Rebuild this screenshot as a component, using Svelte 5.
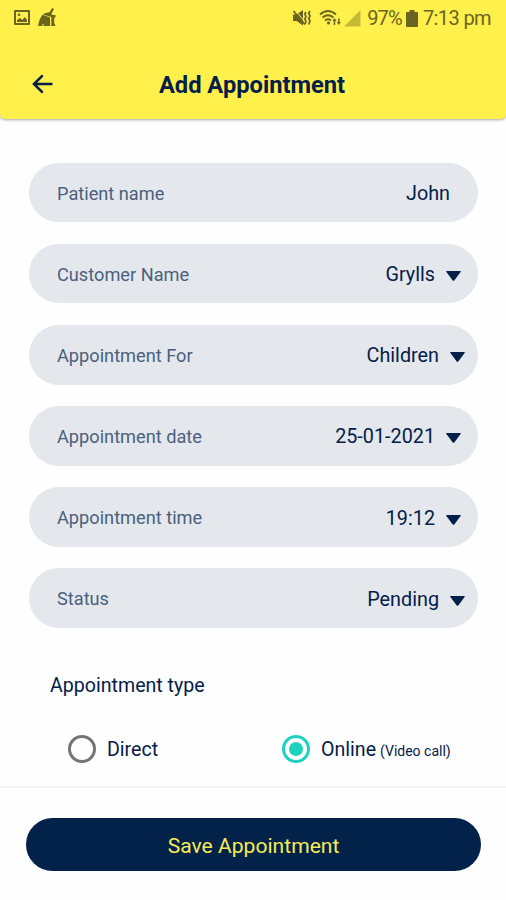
<script>
  const fields = [
    { label: 'Patient name', value: 'John', kind: 'text' },
    { label: 'Customer Name', value: 'Grylls', kind: 'picker' },
    { label: 'Appointment For', value: 'Children', kind: 'select' },
    { label: 'Appointment date', value: '25-01-2021', kind: 'picker' },
    { label: 'Appointment time', value: '19:12', kind: 'picker' },
    { label: 'Status', value: 'Pending', kind: 'select' }
  ];

  const types = [
    { id: 'direct', label: 'Direct', note: '' },
    { id: 'online', label: 'Online', note: '(Video call)' }
  ];

  let selected = 'online';
</script>

<div class="screen">
  <header class="header">
    <div class="status-bar">
      <div class="status-left">
        <svg width="18" height="18" viewBox="0 0 18 18">
          <path fill-rule="evenodd" d="M2 1h14q1 0 1 1v13q0 1-1 1H2q-1 0-1-1V2q0-1 1-1zM3 3v11h12V3z" />
          <path d="M4 13v-2l3-2 2 2 3-3 2 3v2z" />
          <circle cx="6" cy="5.8" r="1.3" />
        </svg>
        <svg class="broom" width="19" height="19" viewBox="0 0 19 19">
          <path d="M14.2 0l1.8 1-2.6 5 1.6 1.5v2L5 6.5Q7.4 4.2 11.2 4.6z" />
          <path d="M4.6 6.8l7.6 2.7.4 8.5H.2Q1 11 4.6 6.8z" />
          <path d="M13.2 7h4.3v2.5h-1.3V15l1.3 3h-4.3z" />
          <path class="cut" d="M12.7 9v9M4.5 18l.8-2" />
        </svg>
      </div>
      <div class="status-right">
        <svg width="20" height="18" viewBox="0 0 20 18">
          <path d="M1 5.500h3.500L11 1v15.500L4.500 12H1z" />
          <path class="cut" d="M3 1l10 12" />
          <path class="line" d="M1.500 2l11.500 13.500" />
          <path class="line" d="M14 3l-1.200 2L14 7.500 12.800 10l1.200 2.500-1 2.500M18 2l-1.300 2.500L18 7l-1.300 2.500L18 12l-1.300 3.500" />
        </svg>
        <svg class="wifi" width="23" height="18" viewBox="0 0 23 18">
          <path class="line" d="M1 5.500Q9 -1.500 17 5.500M3.500 8.500q5.500-4.500 11 0M6 11.500q3-2.500 6 0" />
          <circle cx="9.500" cy="14" r="1.600" />
          <path d="M15.500 9l2 3H16.200v4h-1.500v-4h-1.200zM19.800 16l-2-3h1.300v-3.500h1.500V13h1.200z" />
        </svg>
        <svg class="signal" width="17" height="17" viewBox="0 0 17 17">
          <path d="M16.500 0v16.500H0z" />
        </svg>
        <span class="battery-text">97%</span>
        <svg class="battery" width="12" height="17" viewBox="0 0 12 17">
          <path d="M3.500 0h5v2H11q1 0 1 1v13q0 1-1 1H1q-1 0-1-1V3q0-1 1-1h2.500z" />
        </svg>
        <span class="clock">7:13 pm</span>
      </div>
    </div>
    <div class="app-bar">
      <button class="back" type="button" aria-label="Back">
        <svg width="22" height="20" viewBox="0 0 22 20">
          <path d="M20.500 10H2M10.700 1.300L2 10l8.700 8.700" />
        </svg>
      </button>
      <h1>Add Appointment</h1>
    </div>
  </header>

  <main class="form">
    <div class="fields">
      {#each fields as field}
        <div class="field {field.kind}">
          <span class="label">{field.label}</span>
          <span class="value">{field.value}</span>
          {#if field.kind !== 'text'}
            <svg class="caret" width="15" height="10" viewBox="0 0 15 10">
              <path d="M.8 0h13.400q1.200 0 .4 1L8.300 9.400q-.8.800-1.600 0L.4 1Q-.4 0 .8 0z" />
            </svg>
          {/if}
        </div>
      {/each}
    </div>

    <h2>Appointment type</h2>
    <div class="types">
      {#each types as type}
        <button class="type" type="button" on:click={() => (selected = type.id)}>
          <span class="radio" class:checked={selected === type.id}></span>
          <span class="type-label">{type.label}</span>
          {#if type.note}
            <span class="note">{type.note}</span>
          {/if}
        </button>
      {/each}
    </div>
  </main>

  <footer class="footer">
    <button class="save" type="button">Save Appointment</button>
  </footer>
</div>

<style>
  :global(body) {
    background: #fefefe;
  }

  .screen {
    display: flex;
    flex-direction: column;
    height: 900px;
    box-sizing: border-box;
    overflow: hidden;
    font-family: Roboto, sans-serif;
    color: #04204a;
  }

  button {
    padding: 0;
    border: none;
    background: none;
    font: inherit;
    color: inherit;
    cursor: pointer;
  }

  svg {
    display: block;
    flex: none;
  }

  .header {
    flex: none;
    height: 119px;
    background: #fff04b;
    border-radius: 0 0 5px 5px;
    box-shadow: 0 1px 3px rgba(0, 0, 0, 0.35);
  }

  .status-bar {
    display: flex;
    justify-content: space-between;
    height: 36px;
    padding: 0 15px 0 13px;
    color: #6b6420;
    fill: #6b6420;
  }

  .status-left,
  .status-right {
    display: flex;
    align-items: center;
  }

  .broom {
    margin: -1px 0 0 7px;
  }

  .cut {
    fill: none;
    stroke: #fff04b;
    stroke-width: 1;
  }

  .line {
    fill: none;
    stroke: #6b6420;
    stroke-width: 1.7;
  }

  .wifi {
    margin-left: 7px;
  }

  .signal {
    margin-left: 2px;
    fill: #c5b936;
  }

  .battery-text,
  .clock {
    font-size: 20px;
    letter-spacing: -0.6px;
    white-space: nowrap;
  }

  .battery-text {
    margin-left: 6px;
    letter-spacing: -0.8px;
  }

  .battery {
    margin: 0 5px 0 4px;
  }

  .app-bar {
    display: flex;
    align-items: center;
    height: 98px;
    padding: 0 32px;
  }

  .back svg {
    margin-top: -2px;
    fill: none;
    stroke: #04204a;
    stroke-width: 2.6;
  }

  h1 {
    flex: 1;
    margin: 0 24px 0 0;
    text-align: center;
    font-size: 23.7px;
    font-weight: 700;
    line-height: 30px;
  }

  .form {
    flex: 1;
    padding: 44px 28px 0 29px;
  }

  .fields {
    display: flex;
    flex-direction: column;
    gap: 21.7px;
  }

  .field {
    display: flex;
    align-items: center;
    height: 59.4px;
    padding: 1px 28px 0 28px;
    box-sizing: border-box;
    border-radius: 30px;
    background: #e4e8ec;
  }

  .field.picker {
    padding-right: 17px;
  }

  .field.select {
    padding-right: 13px;
  }

  .label {
    flex: 1;
    font-size: 18.2px;
    color: #4a607e;
  }

  .value {
    margin-top: 1px;
    font-size: 19.8px;
  }

  .caret {
    margin: 4px 0 0 11px;
    fill: #04204a;
  }

  h2 {
    margin: 46px 0 0 21px;
    font-size: 19.6px;
    font-weight: 400;
    line-height: 24px;
  }

  .types {
    display: flex;
    margin-top: 37px;
    padding-left: 39px;
  }

  .type {
    display: flex;
    align-items: center;
    height: 28px;
  }

  .type:first-child {
    width: 214px;
  }

  .radio {
    display: flex;
    align-items: center;
    justify-content: center;
    flex: none;
    width: 28px;
    height: 28px;
    box-sizing: border-box;
    border: 3px solid #757575;
    border-radius: 50%;
  }

  .radio.checked {
    border-color: #1dd3bf;
  }

  .radio.checked::after {
    content: '';
    width: 14px;
    height: 14px;
    border-radius: 50%;
    background: #1dd3bf;
  }

  .type-label {
    margin: 2px 0 0 11px;
    font-size: 19.6px;
  }

  .note {
    margin: 5px 0 0 4px;
    font-size: 14px;
  }

  .footer {
    flex: none;
    height: 114px;
    box-sizing: border-box;
    padding: 30px 25px 0 26px;
    border-top: 2px solid #f4f4f4;
  }

  .save {
    display: block;
    width: 100%;
    height: 53px;
    padding-top: 1px;
    border-radius: 27px;
    background: #02224a;
    color: #f4ea58;
    font-size: 21.1px;
  }
</style>
